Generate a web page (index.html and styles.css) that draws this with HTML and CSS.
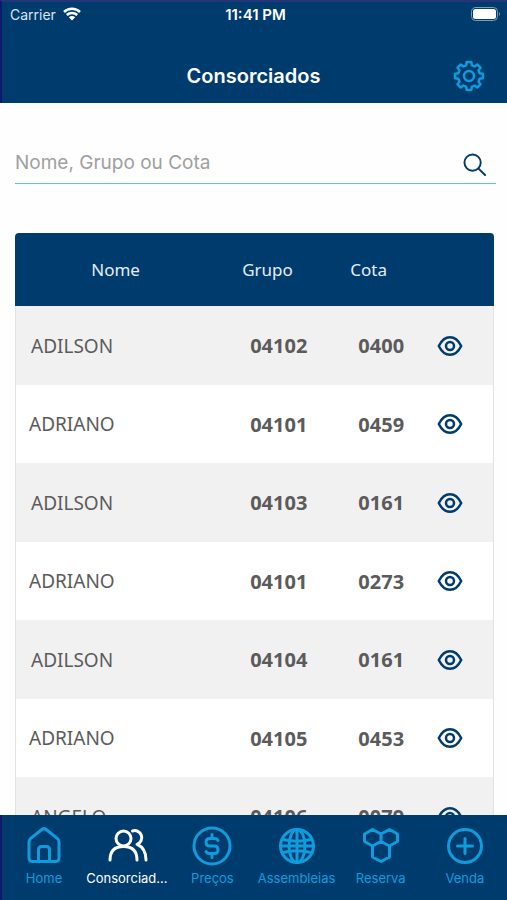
FILE: index.html
```
<!DOCTYPE html>
<html lang="pt-BR">
<head>
    <meta charset="UTF-8">
    <meta name="viewport" content="width=device-width, initial-scale=1.0">
    <title>Consorciados</title>
    <link rel="stylesheet" href="styles.css">
</head>
<body>
    <svg class="sprite" aria-hidden="true">
        <symbol id="eye" viewBox="0 0 26 22">
            <path d="M1.800 11C4.500 5.500 8.300 2.200 13 2.200S21.500 5.500 24.200 11C21.500 16.500 17.700 19.800 13 19.800S4.500 16.500 1.800 11Z"/>
            <circle cx="13" cy="11" r="4"/>
        </symbol>
    </svg>

    <header class="header">
        <div class="status-bar">
            <span class="carrier">
                Carrier
                <svg class="wifi" viewBox="0 0 18 14" aria-hidden="true">
                    <path d="M1 5A11.500 11.500 0 0 1 17 5M3.800 8A7.500 7.500 0 0 1 14.200 8"/>
                    <path class="wifi-dot" d="M9 13.500L5.800 10.200A4.600 4.600 0 0 1 12.200 10.200Z"/>
                </svg>
            </span>
            <span class="clock">11:41 PM</span>
            <svg class="battery" viewBox="0 0 30 14" aria-hidden="true">
                <rect class="battery-case" x="0.500" y="0.500" width="26" height="13" rx="4"/>
                <rect x="2" y="2" width="23" height="10" rx="2.500"/>
                <path class="battery-tip" d="M28 5Q30 7 28 9Z"/>
            </svg>
        </div>
        <div class="title-bar">
            <h1>Consorciados</h1>
            <button class="settings" type="button" aria-label="Configurações">
                <svg viewBox="0 0 32 32" aria-hidden="true">
                    <path d="M13.200 5.400L13.700 2H18.300L18.800 5.400Q20.300 5.800 21.600 6.500L24.300 4.500L27.500 7.700L25.500 10.400Q26.200 11.700 26.600 13.200L30 13.700V18.300L26.600 18.800Q26.200 20.300 25.500 21.600L27.500 24.300L24.300 27.500L21.600 25.500Q20.300 26.200 18.800 26.600L18.300 30H13.700L13.200 26.600Q11.700 26.200 10.400 25.500L7.700 27.500L4.500 24.300L6.500 21.600Q5.800 20.300 5.400 18.800L2 18.300V13.700L5.400 13.200Q5.800 11.700 6.500 10.400L4.500 7.700L7.700 4.500L10.400 6.500Q11.700 5.800 13.200 5.400Z"/>
                    <circle cx="16" cy="16" r="5"/>
                </svg>
            </button>
        </div>
    </header>

    <main class="content">
        <form class="search" role="search">
            <input type="text" placeholder="Nome, Grupo ou Cota" aria-label="Nome, Grupo ou Cota">
            <button type="submit" aria-label="Buscar">
                <svg viewBox="0 0 24 24" aria-hidden="true">
                    <circle cx="10" cy="10" r="8.500"/>
                    <path d="M16 16L23 23"/>
                </svg>
            </button>
        </form>

        <table class="members">
            <thead>
                <tr>
                    <th class="name">Nome</th>
                    <th class="group">Grupo</th>
                    <th class="quota">Cota</th>
                    <th class="action"></th>
                </tr>
            </thead>
            <tbody>
                <tr>
                    <td class="name">ADILSON</td>
                    <td class="group">04102</td>
                    <td class="quota">0400</td>
                    <td class="action"><button type="button" aria-label="Ver ADILSON"><svg><use href="#eye"/></svg></button></td>
                </tr>
                <tr>
                    <td class="name">ADRIANO</td>
                    <td class="group">04101</td>
                    <td class="quota">0459</td>
                    <td class="action"><button type="button" aria-label="Ver ADRIANO"><svg><use href="#eye"/></svg></button></td>
                </tr>
                <tr>
                    <td class="name">ADILSON</td>
                    <td class="group">04103</td>
                    <td class="quota">0161</td>
                    <td class="action"><button type="button" aria-label="Ver ADILSON"><svg><use href="#eye"/></svg></button></td>
                </tr>
                <tr>
                    <td class="name">ADRIANO</td>
                    <td class="group">04101</td>
                    <td class="quota">0273</td>
                    <td class="action"><button type="button" aria-label="Ver ADRIANO"><svg><use href="#eye"/></svg></button></td>
                </tr>
                <tr>
                    <td class="name">ADILSON</td>
                    <td class="group">04104</td>
                    <td class="quota">0161</td>
                    <td class="action"><button type="button" aria-label="Ver ADILSON"><svg><use href="#eye"/></svg></button></td>
                </tr>
                <tr>
                    <td class="name">ADRIANO</td>
                    <td class="group">04105</td>
                    <td class="quota">0453</td>
                    <td class="action"><button type="button" aria-label="Ver ADRIANO"><svg><use href="#eye"/></svg></button></td>
                </tr>
                <tr>
                    <td class="name">ANGELO</td>
                    <td class="group">04106</td>
                    <td class="quota">0079</td>
                    <td class="action"><button type="button" aria-label="Ver ANGELO"><svg><use href="#eye"/></svg></button></td>
                </tr>
            </tbody>
        </table>
    </main>

    <nav class="tabs">
        <a href="#home">
            <svg viewBox="0 0 40 40" aria-hidden="true">
                <path d="M5 16Q5 14 6.500 12.700L17.800 3.500Q20 1.800 22.200 3.500L33.500 12.700Q35 14 35 16V32Q35 35.500 31.500 35.500H8.500Q5 35.500 5 32Z"/>
                <path d="M14.500 35V24Q14.500 20.500 18 20.500H22Q25.500 20.500 25.500 24V35"/>
            </svg>
            <span>Home</span>
        </a>
        <a href="#consorciados" class="active">
            <svg viewBox="0 0 40 40" aria-hidden="true">
                <circle cx="15.500" cy="12.500" r="7.500"/>
                <path d="M2 34Q2 20.500 15.500 20.500T29 34M24.500 5A7 7 0 0 1 29 18.300Q38 22 38 34"/>
            </svg>
            <span>Consorciados</span>
        </a>
        <a href="#precos">
            <svg viewBox="0 0 40 40" aria-hidden="true">
                <circle cx="20" cy="20" r="18"/>
                <path d="M26 14.500Q25 12.500 22 12.500H18Q14 12.500 14 16.200T18 20H22Q26 20 26 23.800T22 27.500H18Q15 27.500 14 25.500M20 8.500V12M20 28V31.500"/>
            </svg>
            <span>Preços</span>
        </a>
        <a href="#assembleias">
            <svg viewBox="0 0 40 40" aria-hidden="true">
                <circle cx="20" cy="20" r="16.500"/>
                <ellipse cx="20" cy="20" rx="8" ry="16.500"/>
                <path d="M20 3.500V36.500M3.500 20H36.500M6 13.500Q20 17 34 13.500M6 26.500Q20 23 34 26.500"/>
            </svg>
            <span>Assembleias</span>
        </a>
        <a href="#reserva">
            <svg viewBox="0 0 40 40" aria-hidden="true">
                <path d="M11.500 3.500L20 8V15.500L11.500 20L3.500 15.500V8ZM28.500 3.500L36.500 8V15.500L28.500 20L20 15.500V8ZM11.500 20V31L20 35.500L28.500 31V20"/>
            </svg>
            <span>Reserva</span>
        </a>
        <a href="#venda">
            <svg viewBox="0 0 40 40" aria-hidden="true">
                <circle cx="20" cy="20" r="16.500"/>
                <path d="M20 12.500V27.500M12.500 20H27.500"/>
            </svg>
            <span>Venda</span>
        </a>
    </nav>
</body>
</html>
```

FILE: styles.css
```
* {
    box-sizing: border-box;
}
body {
    margin: 0;
    height: 100vh;
    display: flex;
    flex-direction: column;
    background: #fefefe;
    font-family: Inter, "Liberation Sans", sans-serif;
}
button {
    display: flex;
    padding: 0;
    border: 0;
    background: none;
    cursor: pointer;
}
svg {
    display: block;
    fill: none;
    stroke: currentColor;
    stroke-linecap: round;
    stroke-linejoin: round;
}
.sprite {
    display: none;
}

/* header */
.header {
    flex: none;
    background: #003b6d;
    color: #fff;
    border-top: 2px solid #24357a;
    border-left: 2px solid #0b1a6c;
}
.status-bar {
    display: grid;
    grid-template-columns: 1fr auto 1fr;
    align-items: center;
    height: 24px;
    padding: 0 6px 0 8px;
    font-size: 14px;
}
.carrier {
    display: flex;
    align-items: center;
    gap: 7px;
    color: #dbe6f0;
}
.wifi {
    width: 18px;
    height: 14px;
    color: #fff;
    stroke-width: 2.5;
    stroke-linecap: butt;
}
.wifi-dot {
    fill: #fff;
    stroke: none;
}
.clock {
    font-size: 15px;
    font-weight: 600;
}
.battery {
    justify-self: end;
    width: 30px;
    height: 14px;
    fill: #fff;
    stroke: none;
}
.battery-case {
    fill: none;
    stroke: #7f9db6;
}
.battery-tip {
    fill: #7f9db6;
}
.title-bar {
    display: grid;
    grid-template-columns: 1fr auto 1fr;
    align-items: center;
    height: 77px;
    padding: 22px 22px 0 20px;
}
.title-bar h1 {
    grid-column: 2;
    margin: 0;
    font-size: 20px;
    font-weight: 600;
}
.settings {
    justify-self: end;
    color: #109bdc;
}
.settings svg {
    width: 32px;
    height: 32px;
    stroke-width: 2.5;
}

/* search + list */
.content {
    flex: 1;
    min-height: 0;
    overflow-y: auto;
    scrollbar-width: none;
    padding: 38px 13px 0 15px;
}
.search {
    display: flex;
    align-items: center;
    height: 43px;
    margin-right: -2px;
    padding-right: 10px;
    border-bottom: 1px solid #5cc0f5;
}
.search input {
    flex: 1;
    min-width: 0;
    padding: 0;
    border: 0;
    outline: 0;
    background: none;
    color: #333;
    font: 19px Inter, "Liberation Sans", sans-serif;
}
.search input::placeholder {
    color: #a0a0a0;
}
.search button {
    padding-top: 4px;
    color: #003b6d;
}
.search button svg {
    width: 23px;
    height: 23px;
    stroke-width: 2;
}
.members {
    width: 100%;
    margin-top: 49px;
    table-layout: fixed;
    border-collapse: separate;
    border-spacing: 0;
    font-family: "Noto Sans", sans-serif;
    color: #5b5b5b;
}
.members th {
    height: 73px;
    padding: 0;
    background: #003b6d;
    color: #e6edf4;
    font-size: 17px;
    font-weight: 400;
    text-align: left;
}
.members th.name {
    width: 42%;
    text-align: center;
    border-top-left-radius: 4px;
}
.members th.group {
    width: 23%;
    padding-left: 26px;
}
.members th.quota {
    width: 17%;
    padding-left: 24px;
}
.members th.action {
    border-top-right-radius: 4px;
}
.members td {
    height: 78px;
    padding: 0;
    background: #fff;
    font-size: 19px;
}
.members tbody tr:nth-child(odd) td {
    height: 79px;
    background: #f1f1f1;
}
.members td.name {
    padding-left: 13px;
    border-left: 1px solid #e2e2e2;
}
.members tbody tr:nth-child(odd) td.name {
    padding-left: 15px;
}
.members td.group,
.members td.quota {
    padding-left: 34px;
    font-size: 20px;
    font-weight: 700;
}
.members td.quota {
    padding-left: 32px;
}
.members td.action {
    border-right: 1px solid #e2e2e2;
}
.members td button {
    margin: 0 auto;
    color: #003b6d;
}
.members td svg {
    width: 26px;
    height: 22px;
    stroke-width: 2.5;
}

/* bottom tabs */
.tabs {
    flex: none;
    display: grid;
    grid-template-columns: repeat(6, minmax(0, 1fr));
    height: 85px;
    padding-top: 11px;
    background: #003b6d;
    border-left: 2px solid #0b1a6c;
}
.tabs a {
    display: flex;
    flex-direction: column;
    align-items: center;
    gap: 4px;
    color: #109bdc;
    font-size: 13px;
    line-height: 16px;
    text-decoration: none;
}
.tabs svg {
    width: 40px;
    height: 40px;
    stroke-width: 3;
}
.tabs span {
    max-width: 100%;
    overflow: hidden;
    text-overflow: ellipsis;
    white-space: nowrap;
}
.tabs .active {
    color: #fff;
}
```
